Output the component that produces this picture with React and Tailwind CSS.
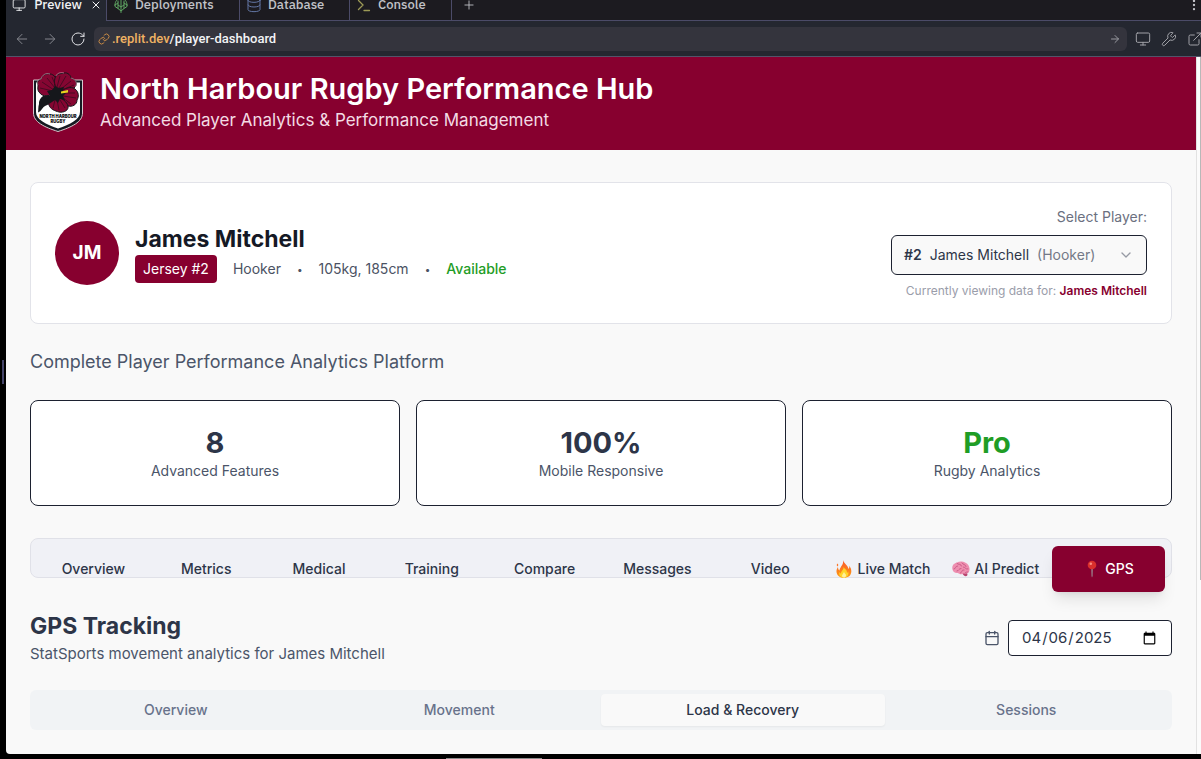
import { useState } from "react";
import { ArrowLeft, ArrowRight, RotateCw, Link, Monitor, Wrench, ExternalLink, X, Plus, Database, EllipsisVertical, ChevronDown, Calendar } from "lucide-react";

const stats = [
  { value: "8", label: "Advanced Features", tone: "text-[#2d3548]" },
  { value: "100%", label: "Mobile Responsive", tone: "text-[#2d3548]" },
  { value: "Pro", label: "Rugby Analytics", tone: "text-[#1f9d26]" },
];

const sections = ["Overview", "Metrics", "Medical", "Training", "Compare", "Messages", "Video"];
const views = ["Overview", "Movement", "Load & Recovery", "Sessions"];

function DeployIcon() {
  return (
    <svg viewBox="0 0 16 16" className="size-4 shrink-0 text-[#5fa562]" fill="none" stroke="currentColor" strokeWidth="1" strokeLinecap="round" strokeLinejoin="round" aria-hidden="true">
      <path d="M8 15.500V1M2 8c0-4 2.500-6.500 6-6.500s6 2.500 6 6.500M2 8v1.500l3 2M14 8v1.500l-3 2M5 4v7.500l3 2.500 3-2.500V4M2 8l3-2M14 8l-3-2M5 8l3 2 3-2" />
    </svg>
  );
}

function PromptIcon() {
  return (
    <svg viewBox="0 0 16 16" className="size-4 shrink-0 text-[#9c9a56]" fill="none" stroke="currentColor" strokeWidth="1.3" strokeLinecap="round" aria-hidden="true">
      <path d="M2.500 3.500 7 8l-4.500 4.500M8 13.500h5.500" />
    </svg>
  );
}

function Crest() {
  return (
    <svg viewBox="0 0 56 64" className="h-16 w-14 shrink-0" role="img" aria-label="North Harbour Rugby">
      <path d="M3.500 10H52.500V43C52.500 52 42 57 28 61.500C14 57 3.500 52 3.500 43Z" fill="#151a22" stroke="#d6c9ce" strokeWidth="1" />
      <path d="M6 12.500H50V42C50 49.500 40 54.500 28 58.500C16 54.500 6 49.500 6 42Z" fill="#fff" />
      <path d="M17 25C12 25 8.500 30 9 34C8 37 8.500 40 8 42.500C12 41 12 37 16 35.500L22 33L24 26Z" fill="#15171b" />
      <g fill="#850632" stroke="#15171b" strokeWidth="1">
        <path d="M26 21C21 27 12 27 10 23C7 21 8 17 8 15C6 12 9 10 11 9C12 5 17 3 20 4C24 4 27 9 28 13Z" />
        <path d="M26 20C24 14 24 9 26 6C28 3 32 4 34 3C38 2 41 6 41 8C46 9 48 14 45 17C42 21 35 20 31 22Z" />
        <path d="M30 22C35 18 41 16 45 19C49 22 49 27 47 30C47 35 42 37 38 36C34 35 32 31 30 27Z" />
        <path d="M27 26C21 27 17 31 19 35C20 39 25 41 29 42C34 43 39 40 38 36C37 32 32 28 27 26Z" />
      </g>
      <path d="M20 4C16 2.500 12 5 11 9C8 9 6 12 8 15M34 3C31 2 27 3 26 6M41 8C46 9 48 14 45 17" fill="none" stroke="#d7b0c0" strokeWidth=".6" />
      <path d="M12 12L24 20M17 8L25 18M22 7L26 17M10 18L23 21M30 6L27 17M36 6L29 18M41 11L31 19M44 15L32 20M45 23L33 23M46 28L33 26M41 34L33 28M35 38L30 30M29 40L27 30M23 38L25 30" fill="none" stroke="#3a0a1e" strokeWidth=".8" />
      <path d="M17 21L22 20L25 16L29 18L34 17L33 21L36 23L33 26L35 30L30 29L28 33L25 30L19 34L17 30L20 26Z" fill="#15171b" />
      <path d="M31 21.500L38 20V22.500L31 23.500Z" fill="#e7d51f" />
      <text x="28" y="48" textAnchor="middle" fontFamily="Inter, sans-serif" fontSize="4.200" fontWeight="900" fill="#111">NORTH HARBOUR</text>
      <text x="28" y="52.500" textAnchor="middle" fontFamily="Inter, sans-serif" fontSize="4.200" fontWeight="900" fill="#111">RUGBY</text>
    </svg>
  );
}

function Flame() {
  return (
    <svg viewBox="0 0 18 18" className="size-[18px] shrink-0" aria-hidden="true">
      <defs>
        <linearGradient id="flame" x1="0" y1="0" x2="0" y2="1"><stop stopColor="#f9572c" /><stop offset="1" stopColor="#ff9d12" /></linearGradient>
      </defs>
      <path d="M8 0C9 4 13 5 13.500 9C14.500 8 14.500 6.500 14 5.500C17 9 17 13 14.500 16C11.500 18.500 5.500 18.500 3 15.500C.5 12 1.500 9 3 7C3 9 3.500 10 4.500 10.500C4.500 7 9 5 8 0Z" fill="url(#flame)" />
      <path d="M8.500 7C10.500 10 12 9.500 12 13C13 12.500 13 11.500 13 11C14.500 15 12 17.500 9 17.500C5.500 17.500 3.500 15.500 4.500 12C5 13 5.500 13.500 6 13.500C6 10.500 9 10 8.500 7Z" fill="#ffd429" />
      <path d="M9 12C10 14 11 14 11 15.500C11 17 10 17.500 9 17.500C7 17.500 6.500 16 7.500 14.500Z" fill="#fff09a" />
      <path d="M2.500 3.500C3.500 4.500 3.500 5.500 2.500 6.500C1.500 5.500 1.500 4.500 2.500 3.500Z" fill="#fc7628" />
    </svg>
  );
}

function Brain() {
  return (
    <svg viewBox="0 0 18 18" className="size-[18px] shrink-0" aria-hidden="true">
      <path d="M10 13L15 12.500L15.500 15C14 17.500 11.500 16 10 13Z" fill="#b8446e" />
      <path d="M.5 9.500C-.5 6 2 3 5 2.500C7.500 1 11 1.500 13 2.500C16 3.500 18 7 17.500 10C17.500 13 14 14.500 11.500 13.500C9.500 15 7 14 6 13C3 13.500 1 12 .5 9.500Z" fill="#ee8fb0" />
      <path d="M2 9C4 9 3 6 5.500 6M5 3.500C6.500 5 9 3.500 9.500 6M10 3C11 5 13.500 4 14 6.500M5 11C7 11 6.500 8.500 9 8.500M8.500 13C11 12 8.500 10 12 10M11.500 7C13.500 7 13 9.500 16 9M13 13C14 12 14.500 12 16 12" fill="none" stroke="#c65682" strokeWidth=".9" strokeLinecap="round" />
    </svg>
  );
}

function Pin() {
  return (
    <svg viewBox="0 0 18 18" className="size-[18px] shrink-0" aria-hidden="true">
      <path d="M8.300 8H9.800L9.600 16L9 17.500L8.500 16Z" fill="#9c8790" />
      <circle cx="9" cy="5" r="4.300" fill="#d92f2c" />
      <circle cx="7.800" cy="3.700" r="1.300" fill="#f98b80" />
    </svg>
  );
}

function BrowserBar() {
  return (
    <div className="bg-[#1c1b20] font-['IBM_Plex_Sans','Noto_Sans',sans-serif] text-[#c2c3c8]">
      <div className="flex h-[21px] items-end overflow-hidden text-[13px] font-medium">
        <div className="flex h-8 w-[100px] shrink-0 items-center gap-2 bg-[#242730] pl-1.5 text-[#f2f3f5]">
          <Monitor className="size-4" strokeWidth={1.5} />
          <span>Preview</span>
          <button aria-label="Close Preview" className="ml-auto pr-1"><X className="size-3" /></button>
        </div>
        <div className="flex h-8 w-[134px] shrink-0 items-center gap-1.5 border-x border-b border-[#4b4b68] pl-1.5"><DeployIcon />Deployments</div>
        <div className="flex h-8 w-[110px] shrink-0 items-center gap-1.5 border-r border-b border-[#4b4b68] pl-1.5"><Database className="size-4 text-[#6377a5]" strokeWidth={1.5} />Database</div>
        <div className="flex h-8 w-[102px] shrink-0 items-center gap-1.5 border-r border-b border-[#4b4b68] pl-1.5"><PromptIcon />Console</div>
        <div className="flex h-8 grow items-center justify-between border-b border-[#4b4b68] pl-2.5">
          <button aria-label="New tab"><Plus className="size-3.5" strokeWidth={1.5} /></button>
          <button aria-label="More options"><EllipsisVertical className="size-3.5" /></button>
        </div>
      </div>
      <div className="flex h-9 items-center overflow-hidden border-b border-[#53536a] bg-[#242730] pl-2">
        <button aria-label="Back" className="text-[#83858c]"><ArrowLeft className="size-4" strokeWidth={1.5} /></button>
        <button aria-label="Forward" className="ml-3 text-[#83858c]"><ArrowRight className="size-4" strokeWidth={1.5} /></button>
        <button aria-label="Reload" className="ml-3 text-[#e1e2e6]"><RotateCw className="size-4" strokeWidth={1.5} /></button>
        <div className="ml-2 flex h-6 grow items-center rounded-md bg-[#34343d] px-1 font-['Roboto',sans-serif] text-[13px] font-medium">
          <Link className="mr-0.5 size-3 text-[#c78a45]" />
          <span className="text-[#efb263]">.replit.dev</span><span className="text-[#f2f3f5]">/player-dashboard</span>
          <button aria-label="Go" className="ml-auto pr-0.5 text-[#999aa1]"><ArrowRight className="size-3" /></button>
        </div>
        <div className="ml-2 flex shrink-0 items-center gap-2.5 text-[#a0a1a7]">
          <button aria-label="Device size"><Monitor className="size-4" strokeWidth={1.5} /></button>
          <button aria-label="Developer tools"><Wrench className="size-4" strokeWidth={1.5} /></button>
          <button aria-label="Open in new tab" className="-mr-0.5"><ExternalLink className="size-4" strokeWidth={1.5} /></button>
        </div>
      </div>
    </div>
  );
}

export default function App() {
  const [view, setView] = useState("Load & Recovery");
  const [date, setDate] = useState("2025-04-06");
  return (
    <div className="relative flex h-screen flex-col overflow-hidden bg-black pl-1.5 font-['Inter',sans-serif]">
      <div className="absolute top-[360px] left-0.5 h-6 w-0.5 bg-[#45456a]" />
      <BrowserBar />
      <div className="flex min-h-0 grow overflow-hidden rounded-bl-sm bg-[#f9f9f9]">
        <div className="min-w-0 grow">
          <header className="flex h-[93px] items-center gap-3.5 bg-[#87002f] pb-1 pl-6 text-white">
            <Crest />
            <div>
              <h1 className="text-[29px] leading-9 font-semibold">North Harbour Rugby Performance Hub</h1>
              <p className="text-[17px] leading-[26px] text-[#f3dbe4]">Advanced Player Analytics &amp; Performance Management</p>
            </div>
          </header>
          <main className="px-6 pt-8">
            <section className="flex h-[142px] items-center justify-between rounded-lg border border-[#e2e3e9] bg-white px-6">
              <div className="flex items-center gap-4">
                <div className="flex size-16 items-center justify-center rounded-full bg-[#87002f] text-[19px] font-bold text-white">JM</div>
                <div>
                  <h2 className="text-[23px] leading-8 font-bold text-[#151925]">James Mitchell</h2>
                  <div className="flex items-center gap-4 text-[14px] leading-5 text-[#4b5263]">
                    <span className="rounded bg-[#87002f] px-2 py-1 text-white">Jersey #2</span>
                    <span>Hooker</span><span className="text-[10px]">•</span><span>105kg, 185cm</span><span className="text-[10px]">•</span>
                    <span className="font-medium text-[#1f9d26]">Available</span>
                  </div>
                </div>
              </div>
              <div className="flex flex-col items-end">
                <label htmlFor="player" className="text-[14px] leading-5 text-[#6b7080]">Select Player:</label>
                <div className="mt-2 grid h-10 w-64 rounded-md border border-[#1c2130] bg-[#f9f9f9] text-[14px] leading-5 text-[#2d3548]">
                  <div className="col-start-1 row-start-1 flex items-center gap-2 px-3" aria-hidden="true">
                    <span className="font-semibold">#2</span><span>James Mitchell</span><span className="text-[#747987]">(Hooker)</span>
                    <ChevronDown className="ml-auto size-4 text-[#969aa4]" />
                  </div>
                  <select id="player" className="col-start-1 row-start-1 cursor-pointer opacity-0"><option>#2 James Mitchell (Hooker)</option></select>
                </div>
                <p className="mt-2 text-[12px] leading-4 text-[#9a9daa]">Currently viewing data for: <span className="font-semibold text-[#87002f]">James Mitchell</span></p>
              </div>
            </section>
            <h2 className="mt-6 text-[18px] leading-7 text-[#4b5569]">Complete Player Performance Analytics Platform</h2>
            <section className="mt-6 grid grid-cols-3 gap-4">
              {stats.map((s) => (
                <div key={s.label} className="flex h-[106px] flex-col items-center justify-center rounded-lg border border-[#1c2130] bg-white">
                  <div className={"text-[29px] leading-9 font-bold " + s.tone}>{s.value}</div>
                  <div className="text-[14px] leading-5 text-[#4b5569]">{s.label}</div>
                </div>
              ))}
            </section>
            <nav aria-label="Player sections" className="mt-8 grid h-10 grid-cols-10 rounded-lg border border-[#e0e1e8] bg-[#f0f1f6] px-1.5 pt-[7px] text-[14px] leading-5 font-medium text-[#2d3548]">
              {sections.map((s) => <button key={s} className="h-[46px]">{s}</button>)}
              <button className="flex h-[46px] items-center justify-center gap-1 whitespace-nowrap"><Flame />Live Match</button>
              <button className="flex h-[46px] items-center justify-center gap-1 whitespace-nowrap"><Brain />AI Predict</button>
              <button className="flex h-[46px] items-center justify-center gap-1 rounded-md bg-[#87002f] text-white shadow-lg"><Pin />GPS</button>
            </nav>
            <section className="mt-8 flex items-center justify-between">
              <div>
                <h2 className="text-[23px] leading-8 font-bold text-[#2d3548]">GPS Tracking</h2>
                <p className="text-[15px] leading-6 text-[#4b5569]">StatSports movement analytics for James Mitchell</p>
              </div>
              <div className="flex items-center gap-2">
                <label htmlFor="session-date" aria-label="Session date"><Calendar className="size-4 text-[#4b5569]" /></label>
                <input id="session-date" type="date" value={date} onChange={(e) => setDate(e.target.value)} className="h-9 w-[164px] rounded border border-[#1c2130] bg-white px-3 text-[15px] text-[#2d3548]" />
              </div>
            </section>
            <nav aria-label="GPS views" className="mt-6 grid h-10 grid-cols-4 rounded-md bg-[#f1f3f5] p-1 text-[14px] leading-5 font-medium text-[#68728b]">
              {views.map((v) => (
                <button key={v} onClick={() => setView(v)} className={v === view ? "rounded bg-[#f9f9f9] text-[#2d3548] shadow-xs" : "rounded"}>{v}</button>
              ))}
            </nav>
          </main>
        </div>
        <div className="flex w-[5px] shrink-0 justify-end border-l border-[#e2e2e2] bg-[#fbfbfb]">
          <div className="h-3/4 w-px bg-[#b8b8b8]" />
        </div>
      </div>
      <div className="flex h-[5px] shrink-0 items-end justify-center pr-[220px]">
        <div className="h-px w-24 bg-[#8b8b8b]" />
      </div>
    </div>
  );
}
